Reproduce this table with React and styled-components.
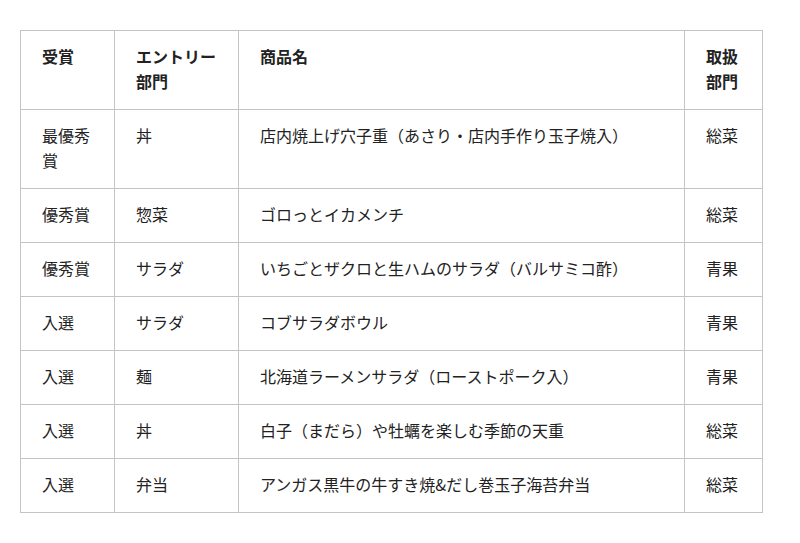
import React from 'react';
import styled, { createGlobalStyle } from 'styled-components';

const GlobalStyle = createGlobalStyle`
  body {
    margin: 0;
    background: #fff;
    font-family: "Noto Sans CJK JP", "Noto Sans", sans-serif;
    color: #222;
  }
`;

const Page = styled.div`
  padding: 30px 20px;
`;

const Table = styled.table`
  width: 742px;
  table-layout: fixed;
  border-collapse: collapse;
  border: 1px solid #e0e0e0;
  font-size: 16px;
  line-height: 25px;
`;

const Col = styled.col`
  width: ${p => p.w}px;
`;

const Th = styled.th`
  text-align: left;
  vertical-align: top;
  font-weight: 700;
  padding: 13px 18px 15px 21px;
  border: 1px solid #c4c4c4;
`;

const Td = styled.td`
  vertical-align: top;
  padding: 13px 18px 15px 21px;
  border: 1px solid #c4c4c4;
`;

const rows = [
  ['最優秀賞', '丼', '店内焼上げ穴子重（あさり・店内手作り玉子焼入）', '総菜'],
  ['優秀賞', '惣菜', 'ゴロっとイカメンチ', '総菜'],
  ['優秀賞', 'サラダ', 'いちごとザクロと生ハムのサラダ（バルサミコ酢）', '青果'],
  ['入選', 'サラダ', 'コブサラダボウル', '青果'],
  ['入選', '麺', '北海道ラーメンサラダ（ローストポーク入）', '青果'],
  ['入選', '丼', '白子（まだら）や牡蠣を楽しむ季節の天重', '総菜'],
  ['入選', '弁当', 'アンガス黒牛の牛すき焼&だし巻玉子海苔弁当', '総菜'],
];

export default function App() {
  return (
    <>
      <GlobalStyle />
      <Page>
        <Table>
          <colgroup>
            <Col w={94} />
            <Col w={124} />
            <Col w={446} />
            <Col w={78} />
          </colgroup>
          <thead>
            <tr>
              <Th>受賞</Th>
              <Th>エントリー部門</Th>
              <Th>商品名</Th>
              <Th>取扱部門</Th>
            </tr>
          </thead>
          <tbody>
            {rows.map((r, i) => (
              <tr key={i}>
                {r.map((c, j) => <Td key={j}>{c}</Td>)}
              </tr>
            ))}
          </tbody>
        </Table>
      </Page>
    </>
  );
}
